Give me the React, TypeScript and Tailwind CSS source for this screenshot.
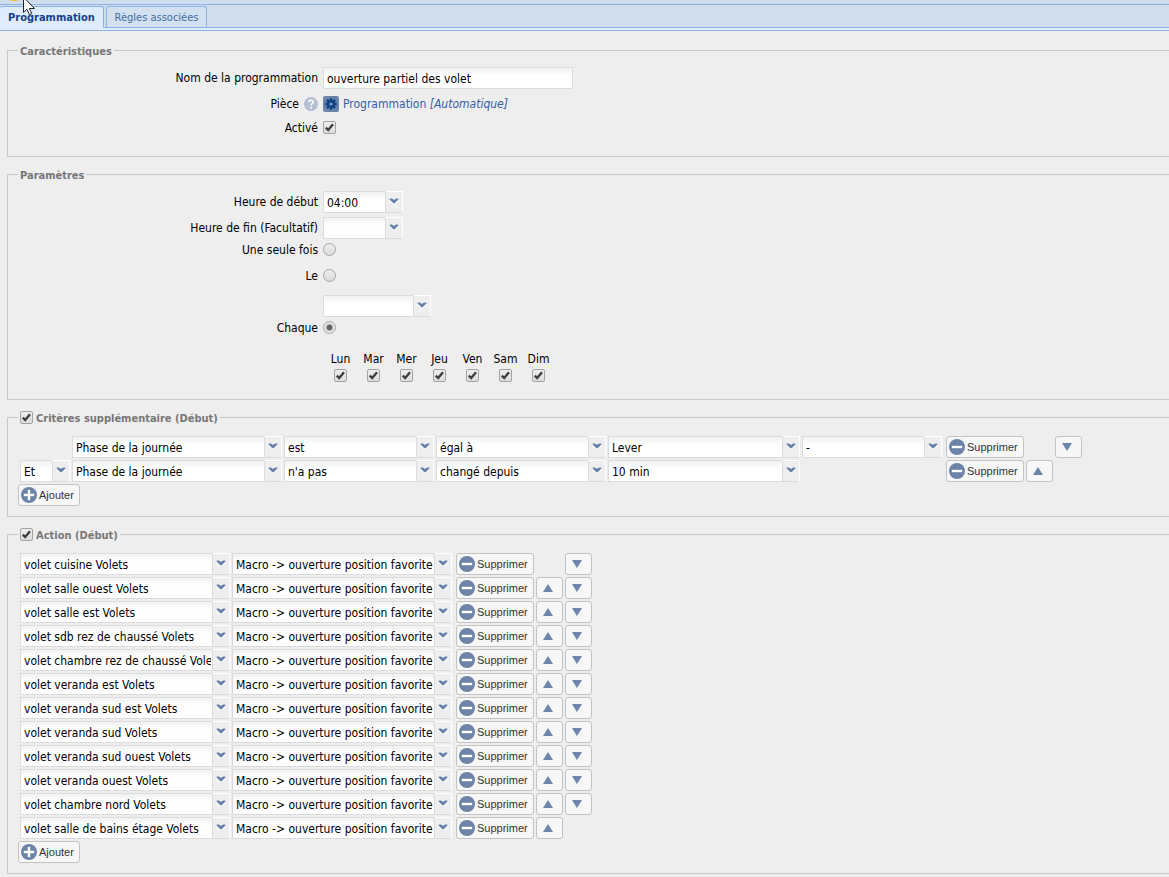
import type { ReactNode } from "react";

const FIELD = "border border-[#dcdcdc] bg-white bg-linear-to-b from-[#eff2f2] from-0% to-white to-40%";

function Check({ label, id }: { label?: string; id?: string }) {
  return (
    <span className="grid h-[13px] w-[13px] shrink-0">
      <input
        id={id}
        type="checkbox"
        defaultChecked
        aria-label={label}
        className="peer col-start-1 row-start-1 h-[13px] w-[13px] appearance-none rounded-[2px] border border-[#a3a3a3] bg-linear-to-b from-[#eeeeee] to-[#dcdcdc]"
      />
      <svg viewBox="0 0 13 13" className="pointer-events-none invisible col-start-1 row-start-1 h-[13px] w-[13px] peer-checked:visible">
        <path d="M2.8 6.6 L5.2 9 L10 3.3" fill="none" stroke="#3f3f3f" strokeWidth="2.4" />
      </svg>
    </span>
  );
}

function Radio({ id, checked = false }: { id: string; checked?: boolean }) {
  return (
    <input
      id={id}
      type="radio"
      name="repetition"
      defaultChecked={checked}
      className="h-[13px] w-[13px] shrink-0 appearance-none rounded-full border border-[#a6a6a6] bg-linear-to-b from-[#eeeeee] to-[#dadada] checked:bg-[radial-gradient(circle,#606060_0_2px,#e6e6e6_4px)]"
    />
  );
}

function Combo({ value, label, id, width }: { value: string; label?: string; id?: string; width: string }) {
  return (
    <span className={`relative flex h-[22px] shrink-0 ${width}`}>
      <select
        id={id}
        aria-label={label}
        defaultValue={value}
        className={`h-full w-full appearance-none pt-px pr-[18px] pl-[3px] text-black ${FIELD}`}
      >
        <option value={value}>{value}</option>
      </select>
      <span className="pointer-events-none absolute inset-y-0 right-0 flex w-[18px] items-center justify-center border border-[#dcdcdc] border-t-white border-r-white bg-[#eeeeee] pr-px pb-px">
        <svg viewBox="0 0 10 7" className="h-[7px] w-[10px]">
          <path d="M0 0H4L5 1.4L6 0H10V2.4L5 7L0 2.4Z" fill="#fff" />
          <path d="M0.5 0.4H3.3L5 2L6.7 0.4H9.5V1.4L5 5.8L0.5 1.4Z" fill="#6581a9" />
        </svg>
      </span>
    </span>
  );
}

function IconButton({ sign, children }: { sign: "plus" | "minus"; children: ReactNode }) {
  return (
    <button
      type="button"
      className={`flex h-[22px] shrink-0 items-center gap-[2px] rounded-[3px] border border-[#c3c3c3] bg-[#f7f7f7] pl-[2px] font-['Liberation_Sans',Arial,sans-serif] text-[11px] text-[#333] ${sign === "plus" ? "w-[62px]" : "w-[78px]"}`}
    >
      <svg viewBox="0 0 16 16" className="h-4 w-4 shrink-0">
        <circle cx="8" cy="8" r="8" fill="#6c84a8" />
        <path d={sign === "plus" ? "M3 7H7V3H9V7H13V9H9V13H7V9H3Z" : "M3 7H13V9H3Z"} fill="#fff" stroke="#fff" strokeWidth="0.4" />
      </svg>
      {children}
    </button>
  );
}

function Move({ direction, shown }: { direction: "up" | "down"; shown: boolean }) {
  if (!shown) return <span className="w-[27px] shrink-0" />;
  return (
    <button
      type="button"
      aria-label={direction === "up" ? "Monter" : "Descendre"}
      className="flex h-[22px] w-[27px] shrink-0 items-center justify-center rounded-[3px] border border-[#c3c3c3] bg-[#f7f7f7] pr-[3px]"
    >
      <svg viewBox="0 0 10 8" className="h-2 w-[10px]">
        <path d={direction === "up" ? "M5 0L10 8H0Z" : "M0 0H10L5 8Z"} fill="#6c84a8" />
      </svg>
    </button>
  );
}

function RowTools({ up, down }: { up: boolean; down: boolean }) {
  return (
    <div className="ml-[2px] flex gap-[2px]">
      <IconButton sign="minus">Supprimer</IconButton>
      <Move direction="up" shown={up} />
      <Move direction="down" shown={down} />
    </div>
  );
}

function Section({ title, toggle, className, children }: { title: string; toggle?: string; className: string; children: ReactNode }) {
  return (
    <fieldset className={`ml-[7px] min-w-0 border border-r-0 border-[#c8c8c8] pl-3 ${className}`}>
      <legend className="-ml-[2px] flex h-[15px] items-center gap-[3px] px-[2px] text-[11px] leading-[15px] font-bold text-[#777]">
        {toggle ? (
          <>
            <Check id={toggle} />
            <label htmlFor={toggle} className="pt-[2px]">{title}</label>
          </>
        ) : (
          <span className="pt-[2px]">{title}</span>
        )}
      </legend>
      {children}
    </fieldset>
  );
}

function FormRow({ label, htmlFor, className, short = false, children }: { label?: ReactNode; htmlFor?: string; className: string; short?: boolean; children: ReactNode }) {
  return (
    <div className={`flex items-center gap-[5px] ${short ? "h-5" : "h-[22px]"} ${className}`}>
      <label htmlFor={htmlFor} className={`flex w-[298px] shrink-0 items-center justify-end gap-[5px] ${short ? "pt-[2px]" : ""}`}>
        {label}
      </label>
      {children}
    </div>
  );
}

const days = ["Lun", "Mar", "Mer", "Jeu", "Ven", "Sam", "Dim"];

const shutters = [
  "volet cuisine Volets",
  "volet salle ouest Volets",
  "volet salle est Volets",
  "volet sdb rez de chaussé Volets",
  "volet chambre rez de chaussé Volets",
  "volet veranda est Volets",
  "volet veranda sud est Volets",
  "volet veranda sud Volets",
  "volet veranda sud ouest Volets",
  "volet veranda ouest Volets",
  "volet chambre nord Volets",
  "volet salle de bains étage Volets",
];

export default function App() {
  return (
    <div className="min-h-screen overflow-hidden bg-[#eeeeee] font-['DejaVu_Sans_Condensed','DejaVu_Sans',sans-serif] text-[12px] leading-4 text-black">
      <header className="relative border-b border-[#8db2e3] bg-[#deecfd] text-[11px]">
        <div className="h-[5px] border-b border-[#8db2e3] bg-[#d0dded]" />
        <nav className="flex h-[23px] items-stretch gap-[2px] border-b border-[#8db2e3] bg-[#d0dded] pt-px">
          <a href="#programmation" className="-mb-px flex w-[104px] items-center rounded-t-[3px] border border-l-0 border-[#8db2e3] border-b-[#deecfd] bg-[#deecfd] pt-px pl-2 font-bold text-[#15428b]">
            Programmation
          </a>
          <a href="#regles" className="flex w-[101px] items-center justify-center rounded-t-[3px] border border-b-0 border-[#8db2e3] bg-[#d3e0f0] pt-px text-[#416da3]">
            Règles associées
          </a>
        </nav>
        <div className="h-[2px]" />
        <svg viewBox="0 0 40 18" className="pointer-events-none absolute top-0 left-0 h-[18px] w-10">
          <path d="M9 0H19Q14 2 9 0Z" fill="#f5b92b" />
          <path d="M23.5 -3V12.5L27 9.3L29.5 14.7L31.8 13.7L29.4 8.5H34.5Z" fill="#fff" stroke="#222" strokeWidth="1" />
        </svg>
      </header>

      <main className="flex flex-col gap-[10px] pt-3 pb-[3px]">
        <Section title="Caractéristiques" className="pt-[9px] pb-[19px]">
          <FormRow label="Nom de la programmation" htmlFor="nom" className="">
            <input id="nom" type="text" defaultValue="ouverture partiel des volet" className={`h-[22px] w-[250px] px-[3px] pt-px ${FIELD}`} />
          </FormRow>
          <FormRow
            className="mt-1"
            label={
              <>
                Pièce
                <svg viewBox="0 0 14 14" className="h-[14px] w-[14px]">
                  <circle cx="7" cy="7" r="7" fill="#b3bfd4" />
                  <path d="M4.8 5.3Q4.8 3.2 7 3.2Q9.2 3.2 9.2 5.1Q9.2 6.2 8 6.9Q7 7.5 7 8.6" fill="none" stroke="#fff" strokeWidth="1.6" />
                  <circle cx="7" cy="10.7" r="1" fill="#fff" />
                </svg>
              </>
            }
          >
            <a href="#piece" className="flex items-center gap-1 text-[#3360a9]">
              <svg viewBox="0 0 16 16" className="h-4 w-4">
                <rect width="16" height="16" rx="2" fill="#6c84a8" />
                <path d="M8 2.2V13.8M2.2 8H13.8M3.9 3.9L12.1 12.1M12.1 3.9L3.9 12.1" stroke="#0f4587" strokeWidth="2.4" />
                <circle cx="8" cy="8" r="3" fill="#8a9dbb" stroke="#0f4587" strokeWidth="2.8" />
              </svg>
              <span>
                Programmation <em>[Automatique]</em>
              </span>
            </a>
          </FormRow>
          <FormRow short label="Activé" htmlFor="active" className="mt-[2px]">
            <Check id="active" />
          </FormRow>
        </Section>

        <Section title="Paramètres" className="pt-[9px] pb-[17px]">
          <FormRow label="Heure de début" htmlFor="debut" className="">
            <Combo id="debut" value="04:00" width="w-20" />
          </FormRow>
          <FormRow label="Heure de fin (Facultatif)" htmlFor="fin" className="mt-1">
            <Combo id="fin" value="" width="w-20" />
          </FormRow>
          <FormRow short label="Une seule fois" htmlFor="once" className="">
            <Radio id="once" />
          </FormRow>
          <FormRow short label="Le" htmlFor="date" className="mt-[6px]">
            <Radio id="date" />
          </FormRow>
          <FormRow className="mt-[10px]">
            <Combo label="Date" value="" width="w-[108px]" />
          </FormRow>
          <FormRow short label="Chaque" htmlFor="weekly" className="">
            <Radio id="weekly" checked />
          </FormRow>
          <div className="mt-[14px] ml-[304px] flex">
            {days.map((day) => (
              <label key={day} className="flex w-[33px] flex-col items-center gap-[2px]">
                {day}
                <Check />
              </label>
            ))}
          </div>
        </Section>

        <Section title="Critères supplémentaire (Début)" toggle="criteres" className="pt-[11px] pb-[10px]">
          <div className="flex flex-col gap-[2px]">
            <div className="flex gap-[2px]">
              <span className="w-[50px] shrink-0" />
              <Combo label="Critère" value="Phase de la journée" width="w-[210px]" />
              <Combo label="Verbe" value="est" width="w-[150px]" />
              <Combo label="Comparaison" value="égal à" width="w-[170px]" />
              <Combo label="Valeur" value="Lever" width="w-[192px]" />
              <Combo label="Décalage" value="-" width="w-[140px]" />
              <RowTools up={false} down />
            </div>
            <div className="flex gap-[2px]">
              <Combo label="Opérateur" value="Et" width="w-[50px]" />
              <Combo label="Critère" value="Phase de la journée" width="w-[210px]" />
              <Combo label="Verbe" value="n'a pas" width="w-[150px]" />
              <Combo label="Comparaison" value="changé depuis" width="w-[170px]" />
              <Combo label="Valeur" value="10 min" width="w-[192px]" />
              <span className="w-[140px] shrink-0" />
              <RowTools up down={false} />
            </div>
            <div className="-ml-[2px]">
              <IconButton sign="plus">Ajouter</IconButton>
            </div>
          </div>
        </Section>

        <Section title="Action (Début)" toggle="action" className="pt-[11px] pb-[10px]">
          <div className="flex flex-col gap-[2px]">
            {shutters.map((name, i) => (
              <div key={name} className="flex gap-[2px]">
                <Combo label="Équipement" value={name} width="w-[210px]" />
                <Combo label="Commande" value="Macro -> ouverture position favorite" width="w-[220px]" />
                <RowTools up={i > 0} down={i < shutters.length - 1} />
              </div>
            ))}
            <div className="-ml-[2px]">
              <IconButton sign="plus">Ajouter</IconButton>
            </div>
          </div>
        </Section>
      </main>
    </div>
  );
}
